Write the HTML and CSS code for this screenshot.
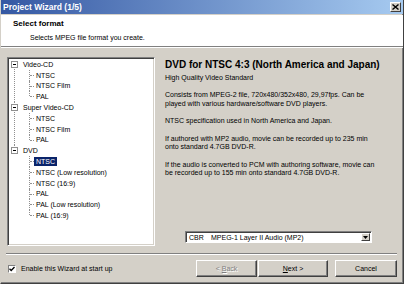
FILE: index.html
```html
<!DOCTYPE html>
<html>
  <head>
    <meta charset="utf-8">
    <title>Project Wizard</title>
    <link rel="stylesheet" href="styles.css">
  </head>
  <body>
    <div class="window">
      <div class="titlebar">
        <span class="title">Project Wizard (1/5)</span>
        <span class="close-btn">
          <svg width="7" height="6" viewBox="0 0 7 6"><path d="M0.5 0.5 L6.5 5.5 M6.5 0.5 L0.5 5.5" stroke="#000" stroke-width="1.4"/></svg>
        </span>
      </div>
      <div class="header">
        <div class="header-title">Select format</div>
        <div class="header-sub">Selects MPEG file format you create.</div>
      </div>
      <div class="main">
        <div class="tree">
          <ul class="roots">
            <li>
              <div class="row"><span class="exp"></span><span class="label">Video-CD</span></div>
              <ul class="kids">
                <li><span class="label">NTSC</span></li>
                <li><span class="label">NTSC Film</span></li>
                <li><span class="label">PAL</span></li>
              </ul>
            </li>
            <li>
              <div class="row"><span class="exp"></span><span class="label">Super Video-CD</span></div>
              <ul class="kids">
                <li><span class="label">NTSC</span></li>
                <li><span class="label">NTSC Film</span></li>
                <li><span class="label">PAL</span></li>
              </ul>
            </li>
            <li>
              <div class="row"><span class="exp"></span><span class="label">DVD</span></div>
              <ul class="kids">
                <li><span class="label selected">NTSC</span></li>
                <li><span class="label">NTSC (Low resolution)</span></li>
                <li><span class="label">NTSC (16:9)</span></li>
                <li><span class="label">PAL</span></li>
                <li><span class="label">PAL (Low resolution)</span></li>
                <li><span class="label">PAL (16:9)</span></li>
              </ul>
            </li>
          </ul>
        </div>
        <div class="info">
          <div class="info-title">DVD for NTSC 4:3 (North America and Japan)</div>
          <div class="tagline">High Quality Video Standard</div>
          <p>Consists from MPEG-2 file, 720x480/352x480, 29,97fps. Can be<br>played with various hardware/software DVD players.</p>
          <p>NTSC specification used in North America and Japan.</p>
          <p>If authored with MP2 audio, movie can be recorded up to 235 min<br>onto standard 4.7GB DVD-R.</p>
          <p>If the audio is converted to PCM with authoring software, movie can<br>be recorded up to 155 min onto standard 4.7GB DVD-R.</p>
          <div class="combo">
            <span class="combo-mode">CBR</span>
            <span class="combo-text">MPEG-1 Layer II Audio (MP2)</span>
            <span class="combo-btn">
              <svg width="5" height="3" viewBox="0 0 5 3"><path d="M0 0 H5 L2.5 3 Z" fill="#000"/></svg>
            </span>
          </div>
        </div>
      </div>
      <div class="footer-sep"></div>
      <div class="footer">
        <label class="check">
          <span class="check-box">
            <svg width="6" height="6" viewBox="0 0 6 6"><path d="M0.5 2.8 L2.2 4.5 L5.5 1" stroke="#000" stroke-width="1.3" fill="none"/></svg>
          </span>
          <span>Enable this Wizard at start up</span>
        </label>
        <div class="buttons">
          <span class="btn btn-back disabled"><span>&lt; <u>B</u>ack</span></span>
          <span class="btn btn-next"><span><u>N</u>ext &gt;</span></span>
          <span class="btn btn-cancel"><span>Cancel</span></span>
        </div>
      </div>
    </div>
  </body>
</html>
```

FILE: styles.css
```css
body, html {
  margin: 0px;
  padding: 0px;
}
body {
  background: #d4d0c8;
  font-family: "Liberation Sans", Arial, sans-serif;
  font-size: 7px;
  color: #000;
}
.window {
  width: 404px;
  height: 284px;
  box-sizing: border-box;
  border-left: 1px solid #d4d0c8;
  border-right: 1px solid #404040;
  border-bottom: 1px solid #404040;
  box-shadow: inset -1px -1px #808080;
  display: flex;
  flex-direction: column;
}
.titlebar {
  height: 14px;
  margin-bottom: 1px;
  padding: 0 2px 0 2px;
  background: linear-gradient(to right, #3558a3, #a6caf0);
  display: flex;
  align-items: center;
  justify-content: space-between;
}
.title {
  color: #fff;
  font-weight: bold;
  font-size: 8.5px;
}
.close-btn {
  width: 11px;
  height: 10px;
  box-sizing: border-box;
  background: #d4d0c8;
  border: 1px solid;
  border-color: #fff #404040 #404040 #fff;
  display: flex;
  align-items: center;
  justify-content: center;
}
.header {
  height: 32px;
  box-sizing: border-box;
  padding: 4px 0 0 12px;
  background: #fff;
  border-bottom: 1px solid #808080;
}
.header-title {
  font-weight: bold;
  font-size: 8px;
  line-height: 10px;
}
.header-sub {
  margin-top: 4px;
  padding-left: 17px;
  line-height: 9px;
}
.main {
  display: flex;
  gap: 10px;
  padding: 9px 7px 0 6px;
  border-top: 1px solid #fff;
}
.tree {
  width: 148px;
  height: 189px;
  box-sizing: border-box;
  padding: 1px;
  background: #fff;
  border: 1px solid;
  border-color: #808080 #fff #fff #808080;
  box-shadow: inset 1px 1px #404040, inset -1px -1px #d4d0c8;
}
.tree ul {
  list-style: none;
  margin: 0;
  padding: 0;
}
.roots > li {
  position: relative;
}
.roots > li::before {
  content: "";
  position: absolute;
  left: 5px;
  top: 0;
  bottom: 0;
  border-left: 1px dotted #909090;
}
.roots > li:first-child::before {
  top: 5px;
}
.roots > li:last-child::before {
  bottom: auto;
  height: 5px;
}
.row {
  height: 10.8px;
  display: flex;
  align-items: center;
}
.exp {
  position: relative;
  z-index: 1;
  width: 7px;
  height: 7px;
  box-sizing: border-box;
  margin-left: 2px;
  margin-right: 3px;
  border: 1px solid #909090;
  background: #fff;
}
.exp::after {
  content: "";
  position: absolute;
  left: 1px;
  top: 2px;
  width: 3px;
  height: 1px;
  background: #000;
}
.label {
  display: inline-block;
  height: 9px;
  line-height: 9px;
  padding: 0 2px;
  white-space: nowrap;
}
.selected {
  background: #0a246a;
  color: #fff;
}
.kids > li {
  position: relative;
  height: 10.8px;
  padding-left: 25px;
  display: flex;
  align-items: center;
}
.kids > li::before {
  content: "";
  position: absolute;
  left: 20px;
  top: 0;
  bottom: 0;
  border-left: 1px dotted #909090;
}
.kids > li:last-child::before {
  bottom: auto;
  height: 5px;
}
.kids > li::after {
  content: "";
  position: absolute;
  left: 21px;
  top: 5px;
  width: 4px;
  border-top: 1px dotted #909090;
}
.info {
  width: 224px;
  display: flex;
  flex-direction: column;
  white-space: nowrap;
}
.info-title {
  padding-top: 1px;
  font-weight: bold;
  font-size: 10px;
  line-height: 14px;
}
.tagline {
  margin-top: 2px;
  line-height: 8.67px;
}
.info p {
  margin: 8.67px 0 0;
  line-height: 8.67px;
}
.combo {
  margin: auto 0 3px 20px;
  width: 187px;
  height: 12px;
  box-sizing: border-box;
  background: #fff;
  border: 1px solid;
  border-color: #808080 #fff #fff #808080;
  box-shadow: inset 1px 1px #404040;
  display: flex;
  align-items: center;
  padding: 0 1px 0 3px;
}
.combo-mode {
  width: 22px;
}
.combo-btn {
  margin-left: auto;
  width: 9px;
  height: 8px;
  box-sizing: border-box;
  background: #d4d0c8;
  border: 1px solid;
  border-color: #fff #404040 #404040 #fff;
  display: flex;
  align-items: center;
  justify-content: center;
}
.footer-sep {
  margin: 7px 6px 0 5px;
  border-top: 1px solid #808080;
  border-bottom: 1px solid #fff;
}
.footer {
  display: flex;
  align-items: center;
  justify-content: space-between;
  padding: 5px 6px 0 7px;
}
.check {
  display: flex;
  align-items: center;
}
.check-box {
  width: 8px;
  height: 8px;
  box-sizing: border-box;
  margin-right: 5px;
  background: #fff;
  border: 1px solid;
  border-color: #808080 #fff #fff #808080;
  display: flex;
  align-items: center;
  justify-content: center;
}
.buttons {
  display: flex;
}
.btn {
  height: 17px;
  box-sizing: border-box;
  background: #d4d0c8;
  border: 1px solid;
  border-color: #fff #404040 #404040 #fff;
  box-shadow: inset -1px -1px #808080;
  display: flex;
  align-items: center;
  justify-content: center;
}
.btn-back {
  width: 61px;
}
.btn-next {
  width: 70px;
  margin-left: 1px;
}
.btn-cancel {
  width: 62px;
  margin-left: 7px;
}
.disabled {
  color: #808080;
  text-shadow: 1px 1px #fff;
}
```
